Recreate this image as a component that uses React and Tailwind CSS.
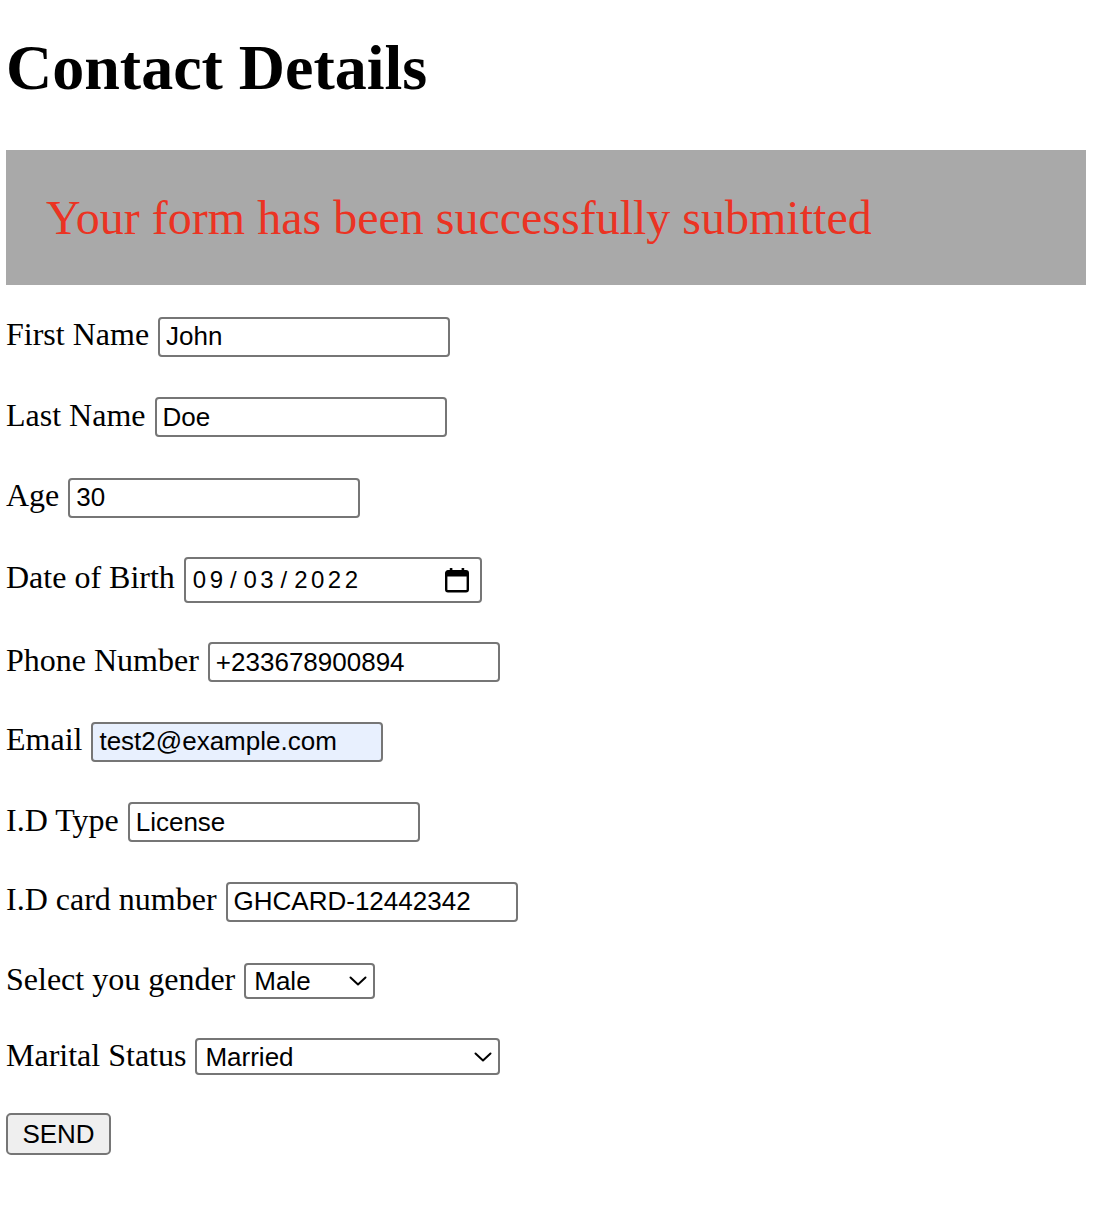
import React from "react";

const inputCls =
  "w-[292px] h-[40px] border-2 border-[#767676] rounded-[4px] px-[6px] text-[26px] font-['Liberation_Sans',Arial,sans-serif] text-black bg-white outline-none leading-[normal]";

function Label({ children }) {
  return <span className="text-[32px] font-['Liberation_Serif','Times_New_Roman',serif] leading-[normal] text-black">{children}</span>;
}

function Chevron() {
  return (
    <svg width="18" height="10" viewBox="0 0 18 10" fill="none" className="absolute right-[8px] top-1/2 -translate-y-1/2 pointer-events-none">
      <path d="M1.5 1.5 L9 8.5 L16.5 1.5" stroke="#000" strokeWidth="2" strokeLinecap="round" strokeLinejoin="round" />
    </svg>
  );
}

function CalendarIcon() {
  return (
    <svg width="26" height="26" viewBox="0 0 26 26" fill="none">
      <rect x="2.2" y="4.2" width="21.6" height="20" rx="1.8" stroke="#000" strokeWidth="2.4" />
      <rect x="2" y="4" width="22" height="5.5" fill="#000" />
      <rect x="5.8" y="1" width="2.6" height="4" rx="0.6" fill="#000" />
      <rect x="17.6" y="1" width="2.6" height="4" rx="0.6" fill="#000" />
    </svg>
  );
}

export default function App() {
  return (
    <div className="bg-white min-h-[1226px] w-[1116px] pl-[6px] leading-[normal]">
      <h1 className="pt-[31px] text-[64px] font-bold font-['Liberation_Serif','Times_New_Roman',serif] leading-[normal] text-black">
        Contact Details
      </h1>
      <div className="mt-[45px] w-[1080px] bg-[#a9a9a9] px-[40px] py-[40px]">
        <p className="text-[48px] leading-[normal] text-[#eb3323] font-['Liberation_Serif','Times_New_Roman',serif]">
          Your form has been successfully submitted
        </p>
      </div>

      <form onSubmit={(e) => e.preventDefault()} className="flex flex-col items-start">
        <div className="mt-[31px] flex items-baseline gap-[9px]">
          <Label>First Name</Label>
          <input className={inputCls} defaultValue="John" />
        </div>
        <div className="mt-[40px] flex items-baseline gap-[9px]">
          <Label>Last Name</Label>
          <input className={inputCls} defaultValue="Doe" />
        </div>
        <div className="mt-[40px] flex items-baseline gap-[9px]">
          <Label>Age</Label>
          <input className={inputCls} defaultValue="30" />
        </div>
        <div className="mt-[39px] flex items-baseline gap-[9px]">
          <Label>Date of Birth</Label>
          <div className="w-[298px] h-[46px] border-2 border-[#767676] rounded-[4px] pl-[7px] pr-[10px] flex items-center justify-between bg-white">
            <span className="text-[24px] leading-[normal] tracking-[3.5px] font-['Liberation_Sans',Arial,sans-serif] text-black">
              <span>09</span>
              <span className="px-[3.4px]">/</span>
              <span>03</span>
              <span className="px-[3.4px]">/</span>
              <span>2022</span>
            </span>
            <CalendarIcon />
          </div>
        </div>
        <div className="mt-[39px] flex items-baseline gap-[9px]">
          <Label>Phone Number</Label>
          <input className={inputCls} defaultValue="+233678900894" />
        </div>
        <div className="mt-[39px] flex items-baseline gap-[9px]">
          <Label>Email</Label>
          <input className={inputCls.replace("bg-white", "bg-[#e8f0fe]")} defaultValue="test2@example.com" />
        </div>
        <div className="mt-[40px] flex items-baseline gap-[9px]">
          <Label>I.D Type</Label>
          <input className={inputCls} defaultValue="License" />
        </div>
        <div className="mt-[39px] flex items-baseline gap-[9px]">
          <Label>I.D card number</Label>
          <input className={inputCls} defaultValue="GHCARD-12442342" />
        </div>
        <div className="mt-[39px] flex items-baseline gap-[9px]">
          <Label>Select you gender</Label>
          <span className="relative inline-block">
            <select
              defaultValue="Male"
              className="appearance-none w-[131px] h-[36px] border-2 border-[#767676] rounded-[4px] pl-[8px] pr-[30px] text-[26px] leading-[30px] font-['Liberation_Sans',Arial,sans-serif] text-black bg-white outline-none"
            >
              <option>Male</option>
              <option>Female</option>
            </select>
            <Chevron />
          </span>
        </div>
        <div className="mt-[38px] flex items-baseline gap-[9px]">
          <Label>Marital Status</Label>
          <span className="relative inline-block">
            <select
              defaultValue="Married"
              className="appearance-none w-[305px] h-[37px] border-2 border-[#767676] rounded-[4px] pl-[8px] pr-[30px] text-[26px] leading-[30px] font-['Liberation_Sans',Arial,sans-serif] text-black bg-white outline-none"
            >
              <option>Single</option>
              <option>Married</option>
              <option>Divorced</option>
            </select>
            <Chevron />
          </span>
        </div>
        <button
          type="submit"
          className="mt-[38px] w-[105px] h-[42px] border-2 border-[#767676] rounded-[5px] bg-[#efefef] text-[26px] leading-[normal] font-['Liberation_Sans',Arial,sans-serif] text-black"
        >
          SEND
        </button>
      </form>
    </div>
  );
}
